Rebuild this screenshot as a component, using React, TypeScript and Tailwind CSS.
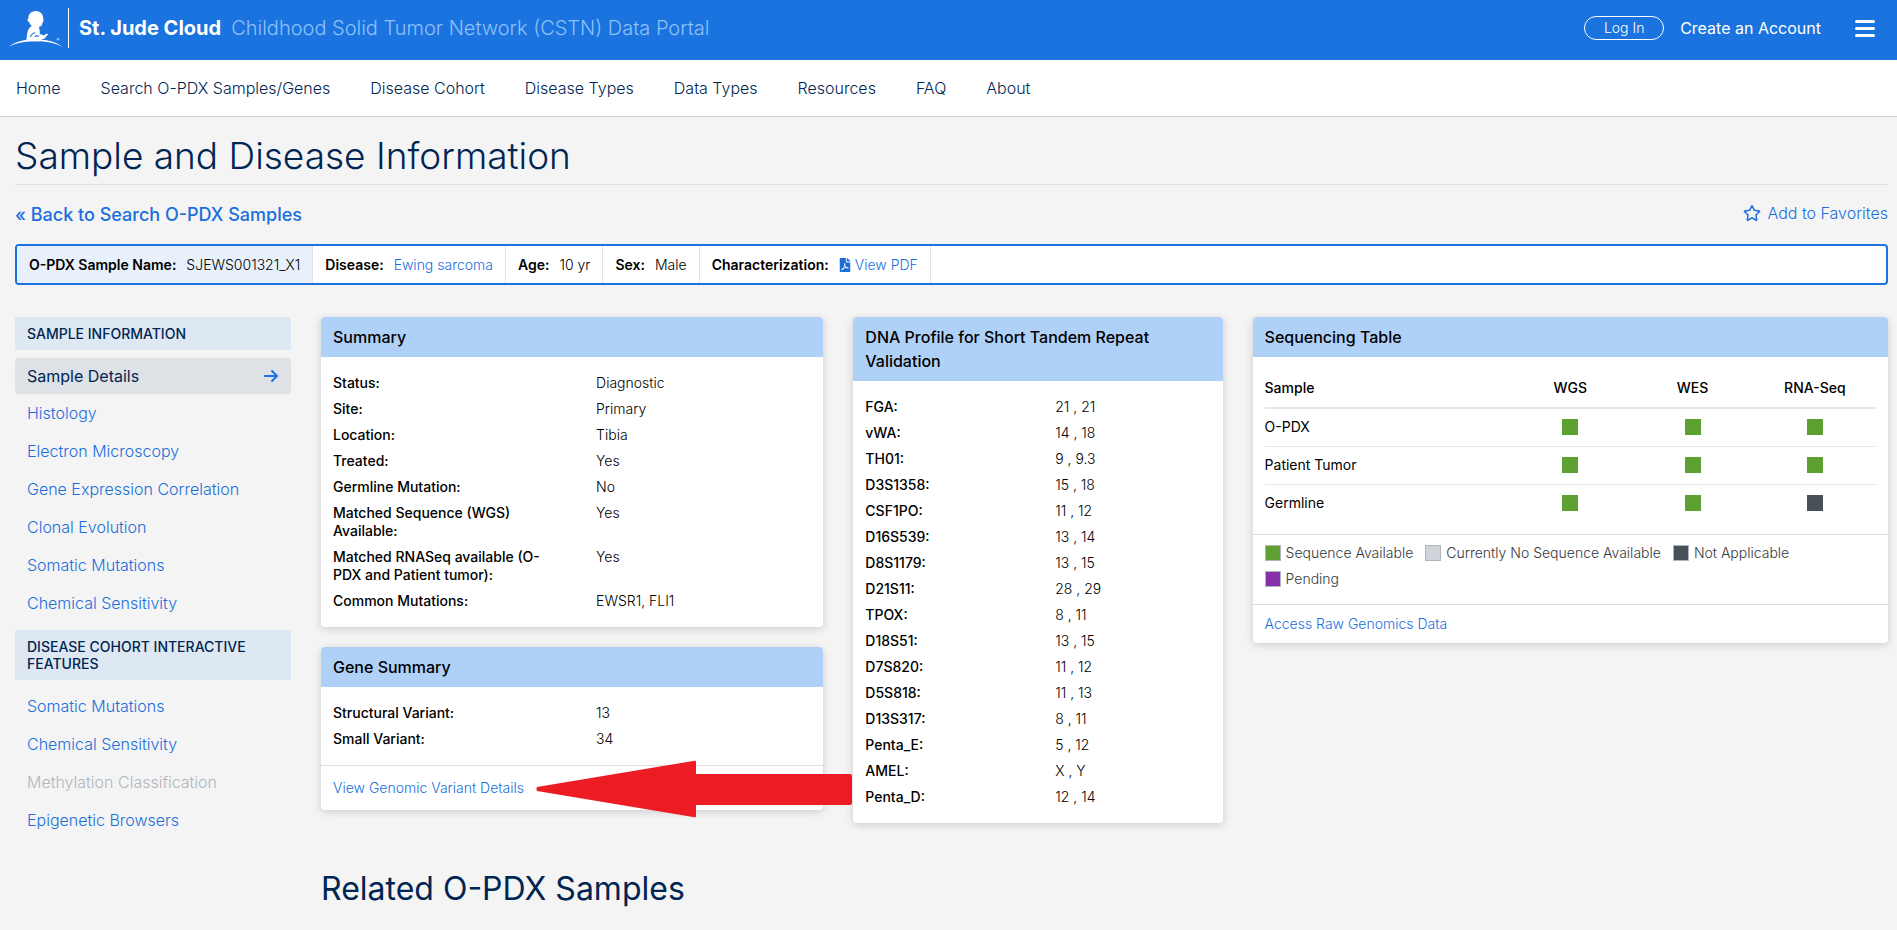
import type { ReactNode } from "react";
import { FaFilePdf, FaRegStar } from "react-icons/fa";

const NAV = ["Home", "Search O-PDX Samples/Genes", "Disease Cohort", "Disease Types", "Data Types", "Resources", "FAQ", "About"];

const SAMPLE_LINKS = ["Histology", "Electron Microscopy", "Gene Expression Correlation", "Clonal Evolution", "Somatic Mutations", "Chemical Sensitivity"];

const COHORT_LINKS = ["Somatic Mutations", "Chemical Sensitivity", "Methylation Classification", "Epigenetic Browsers"];

const SUMMARY: [string, string][] = [
  ["Status:", "Diagnostic"],
  ["Site:", "Primary"],
  ["Location:", "Tibia"],
  ["Treated:", "Yes"],
  ["Germline Mutation:", "No"],
  ["Matched Sequence (WGS) Available:", "Yes"],
  ["Matched RNASeq available (O-PDX and Patient tumor):", "Yes"],
  ["Common Mutations:", "EWSR1, FLI1"],
];

const GENES: [string, string][] = [
  ["Structural Variant:", "13"],
  ["Small Variant:", "34"],
];

const DNA: [string, string][] = [
  ["FGA:", "21 , 21"],
  ["vWA:", "14 , 18"],
  ["TH01:", "9 , 9.3"],
  ["D3S1358:", "15 , 18"],
  ["CSF1PO:", "11 , 12"],
  ["D16S539:", "13 , 14"],
  ["D8S1179:", "13 , 15"],
  ["D21S11:", "28 , 29"],
  ["TPOX:", "8 , 11"],
  ["D18S51:", "13 , 15"],
  ["D7S820:", "11 , 12"],
  ["D5S818:", "11 , 13"],
  ["D13S317:", "8 , 11"],
  ["Penta_E:", "5 , 12"],
  ["AMEL:", "X , Y"],
  ["Penta_D:", "12 , 14"],
];

type Status = "available" | "none" | "na" | "pending";

const STATUS_COLOR: Record<Status, string> = {
  available: "bg-[#5ea032]",
  none: "bg-[#ced4da]",
  na: "bg-[#495057]",
  pending: "bg-[#8530a8]",
};

const STATUS_LABEL: Record<Status, string> = {
  available: "Sequence Available",
  none: "Currently No Sequence Available",
  na: "Not Applicable",
  pending: "Pending",
};

const SEQUENCING: [string, Status[]][] = [
  ["O-PDX", ["available", "available", "available"]],
  ["Patient Tumor", ["available", "available", "available"]],
  ["Germline", ["available", "available", "na"]],
];

function Logo() {
  return (
    <svg viewBox="0 0 56 40" className="h-10 w-14" aria-label="St. Jude" role="img">
      <path
        fill="#fff"
        d="M28 3c-4.500 0-7.600 2.800-7.600 6.800 0 .9-1.300 1.900-.8 3 .3.700 1.100.8 1.500 1.500.8 1.700 1.500 2.900 2.700 3.700-2.300 1.300-3.600 3.200-4.300 6-.7 3-.9 6.200-1.100 9.200h13.800c.5-1.100 1-2 2.200-2.300l2.300-.5 3.600-4.300-1.900-.3-2.600 1.800-3-1.500-.9.800c0-2.800-.3-5.600-.9-7.900.6-1 1.700-.5 2.600-1.300.5-.9.400-1.900.8-2.800.8-.7 1.200-1.600 1-2.900.2-5.300-2.700-9-7.400-9z"
      />
      <path fill="none" stroke="#1a73de" strokeWidth="1.100" strokeLinecap="round" d="M22.300 28.500c1-1.900 2.600-3.200 4.600-3.700M27 28.500l1.600-.8 2 .6" />
      <path fill="#fff" d="M.5 38.800C8 33.500 17 31.300 27.500 31.300s19.500 2.200 27 7.500C46.500 35 38 33.300 27.500 33.300S8.500 35 .5 38.800z" />
      <circle cx="50" cy="31.200" r="1.300" fill="#8dbcf2" />
    </svg>
  );
}

function Card({ title, children }: { title: string; children: ReactNode }) {
  return (
    <section className="overflow-hidden rounded bg-white shadow-[0_2px_8px_rgba(0,0,0,0.16)]">
      <h2 className="bg-[#b0d1f7] px-3 py-2 text-base leading-6 font-medium">{title}</h2>
      {children}
    </section>
  );
}

function Details({ rows }: { rows: [string, string][] }) {
  return (
    <dl className="px-3 py-[13px]">
      {rows.map(([label, value]) => (
        <div key={label} className="flex py-1 text-sm leading-[18px]">
          <dt className="w-[55%] shrink-0 pr-10 font-medium">{label}</dt>
          <dd className="font-light">{value}</dd>
        </div>
      ))}
    </dl>
  );
}

function Fact({ label, children, active = false }: { label: string; children: ReactNode; active?: boolean }) {
  return (
    <div className={`flex items-center gap-[10px] border-r border-[#dee2e6] px-3 ${active ? "bg-[#e8f1fb]" : ""}`}>
      <span className="font-semibold">{label}</span>
      {children}
    </div>
  );
}

function SideHeading({ children }: { children: ReactNode }) {
  return <h2 className="bg-[#dde8f2] px-3 py-2 text-sm leading-[17px] font-medium text-[#012552] uppercase">{children}</h2>;
}

function SideLink({ children }: { children: string }) {
  return children === "Methylation Classification" ? (
    <span className="block px-3 py-[7px] text-[#b0b6bc]">{children}</span>
  ) : (
    <a href="#" className="block px-3 py-[7px] text-[#1a6fdc]">{children}</a>
  );
}

export default function App() {
  return (
    <div className="min-h-screen bg-[#f4f4f4] font-['Inter',sans-serif] text-black">
      <header className="flex h-[60px] items-center bg-[#1a73de] pr-[22px] pb-1 pl-2 text-white">
        <Logo />
        <a href="#" className="ml-1 flex h-10 items-center gap-[10px] border-l border-white pl-[10px] text-xl">
          <span className="font-bold">St. Jude Cloud</span>
          <span className="font-light text-[#8dc1f8]">Childhood Solid Tumor Network (CSTN) Data Portal</span>
        </a>
        <div className="ml-auto flex items-center">
          <button type="button" className="h-6 w-20 rounded-full border border-white text-sm leading-5 font-light">Log In</button>
          <a href="#" className="ml-4 text-base">Create an Account</a>
          <button type="button" aria-label="Menu" className="ml-[34px] flex w-5 flex-col gap-1">
            <span className="h-[3px] rounded-full bg-white" />
            <span className="h-[3px] rounded-full bg-white" />
            <span className="h-[3px] rounded-full bg-white" />
          </button>
        </div>
      </header>

      <nav className="flex h-[57px] items-center gap-10 border-b border-[#d6d6d6] bg-white px-4 text-base font-light text-[#012552]">
        {NAV.map((item) => (
          <a key={item} href="#">{item}</a>
        ))}
      </nav>

      <main className="pr-[9px] pl-[15px]">
        <h1 className="border-b border-[#dee2e6] pt-[17px] pb-[7px] text-[37px] leading-[43px] font-light text-[#012552]">Sample and Disease Information</h1>

        <div className="flex items-start justify-between py-4 text-[#1a6fdc]">
          <a href="#" className="text-lg leading-[27px] font-medium">« Back to Search O-PDX Samples</a>
          <button type="button" className="flex items-center gap-[6px] text-base font-light">
            <FaRegStar className="size-[18px]" />
            Add to Favorites
          </button>
        </div>

        <div className="flex h-[41px] overflow-hidden rounded border-2 border-[#1a73de] bg-white text-sm">
          <Fact label="O-PDX Sample Name:" active><span className="font-light">SJEWS001321_X1</span></Fact>
          <Fact label="Disease:"><a href="#" className="font-light text-[#1a6fdc]">Ewing sarcoma</a></Fact>
          <Fact label="Age:"><span className="font-light">10 yr</span></Fact>
          <Fact label="Sex:"><span className="font-light">Male</span></Fact>
          <Fact label="Characterization:">
            <a href="#" className="flex items-center gap-1 font-light text-[#1a6fdc]">
              <FaFilePdf className="h-[14px] w-3" />
              View PDF
            </a>
          </Fact>
        </div>

        <div className="mt-8 flex items-start gap-[30px]">
          <aside className="w-[276px] shrink-0 text-base leading-6 font-light">
            <SideHeading>Sample Information</SideHeading>
            <a href="#" className="mt-2 flex items-center justify-between rounded bg-[#dee1e5] px-3 py-[6px] font-normal text-[#012552]">
              Sample Details
              <svg viewBox="0 0 16 16" className="size-4 text-[#1a73de]" fill="none" stroke="currentColor" strokeWidth="2" aria-hidden="true">
                <path d="M1 8h13M8.500 2.500 14 8l-5.500 5.500" />
              </svg>
            </a>
            {SAMPLE_LINKS.map((item) => <SideLink key={item}>{item}</SideLink>)}
            <div className="pt-2 pb-[7px]">
              <SideHeading>Disease Cohort Interactive Features</SideHeading>
            </div>
            {COHORT_LINKS.map((item) => <SideLink key={item}>{item}</SideLink>)}
          </aside>

          <div className="min-w-0 grow">
            <div className="grid grid-cols-12 items-start gap-[30px]">
              <div className="relative col-span-4 grid gap-5">
                <Card title="Summary"><Details rows={SUMMARY} /></Card>
                <Card title="Gene Summary">
                  <Details rows={GENES} />
                  <div className="border-t border-[#dfdfdf] px-3 py-3 text-sm leading-5">
                    <a href="#" className="font-light text-[#1a6fdc]">View Genomic Variant Details</a>
                  </div>
                </Card>
                <svg viewBox="0 0 316 58" className="absolute -right-[29px] -bottom-2 h-[58px] w-[316px]" aria-hidden="true">
                  <path fill="#ed1c24" d="M1 27 157 1Q160 0 160 2V14H314Q316 14 316 16V43Q316 45 314 45H160V56Q160 58 157 57L1 31Q0 29 1 27Z" />
                </svg>
              </div>

              <div className="col-span-3">
                <Card title="DNA Profile for Short Tandem Repeat Validation"><Details rows={DNA} /></Card>
              </div>

              <div className="col-span-5">
                <Card title="Sequencing Table">
                  <div className="px-3 pt-3 pb-3">
                    <table className="w-full table-fixed text-sm">
                      <colgroup>
                        <col className="w-2/5" />
                        <col className="w-1/5" />
                        <col className="w-1/5" />
                        <col className="w-1/5" />
                      </colgroup>
                      <thead>
                        <tr className="h-[39px] border-b-2 border-[#e5e7ea]">
                          <th className="text-left font-medium">Sample</th>
                          <th className="font-medium">WGS</th>
                          <th className="font-medium">WES</th>
                          <th className="font-medium">RNA-Seq</th>
                        </tr>
                      </thead>
                      <tbody>
                        {SEQUENCING.map(([name, statuses]) => (
                          <tr key={name} className="h-[38px] border-b border-[#e5e7ea] last:border-b-0">
                            <td>{name}</td>
                            {statuses.map((status, i) => (
                              <td key={i}>
                                <span role="img" aria-label={STATUS_LABEL[status]} className={`mx-auto block size-4 ${STATUS_COLOR[status]}`} />
                              </td>
                            ))}
                          </tr>
                        ))}
                      </tbody>
                    </table>
                  </div>
                  <ul className="flex flex-wrap gap-x-3 border-t border-[#dfdfdf] pt-[5px] pr-16 pb-3 pl-3 text-sm leading-[26px] font-light">
                    {(["available", "none", "na", "pending"] as Status[]).map((status) => (
                      <li key={status} className="flex items-center gap-[5px] text-[#343a40]">
                        <span className={`size-4 border border-[#adb5bd] ${STATUS_COLOR[status]}`} />
                        {STATUS_LABEL[status]}
                      </li>
                    ))}
                  </ul>
                  <div className="border-t border-[#dfdfdf] px-3 py-2 text-sm leading-[22px]">
                    <a href="#" className="font-light text-[#1a6fdc]">Access Raw Genomics Data</a>
                  </div>
                </Card>
              </div>
            </div>
            <h2 className="pt-[46px] pb-3 text-[32px] leading-10 text-[#012552]">Related O-PDX Samples</h2>
          </div>
        </div>
      </main>
    </div>
  );
}
